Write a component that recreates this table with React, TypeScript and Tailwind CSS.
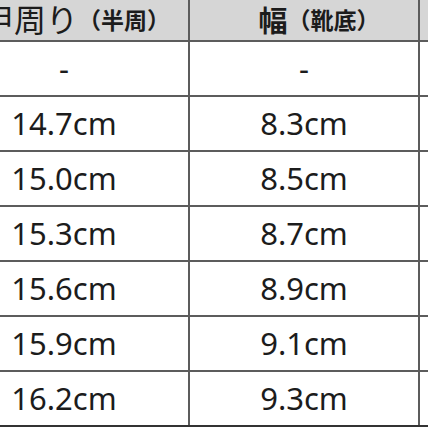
const rows: [string, string][] = [
  ["-", "-"],
  ["14.7cm", "8.3cm"],
  ["15.0cm", "8.5cm"],
  ["15.3cm", "8.7cm"],
  ["15.6cm", "8.9cm"],
  ["15.9cm", "9.1cm"],
  ["16.2cm", "9.3cm"],
];

const font = { fontFamily: '"Noto Sans", "Noto Sans CJK JP", sans-serif' };

export default function App() {
  return (
    <div className="w-[428px] h-[428px] overflow-hidden bg-white text-[#1c1c1c]" style={font}>
      <div className="ml-[-60px] w-[560px]">
        {/* header */}
        <div className="flex h-[42px] bg-[#d6d6d6] border-b-2 border-[#5c5c5c]">
          <div className="w-[250px] shrink-0 flex items-center justify-center pl-6 border-r-2 border-[#5c5c5c]">
            <span className="text-[32px] leading-none whitespace-nowrap">甲周り</span>
            <span className="text-[23px] leading-none font-bold whitespace-nowrap">（半周）</span>
          </div>
          <div className="w-[230px] shrink-0 flex items-center justify-center pl-[30px] border-r-2 border-[#5c5c5c]">
            <span className="text-[29px] leading-none font-bold">幅</span>
            <span className="text-[23px] leading-none font-bold whitespace-nowrap">（靴底）</span>
          </div>
          <div className="flex-1" />
        </div>

        {rows.map(([a, b], i) => (
          <div
            key={i}
            className={
              "flex h-[55px] border-b-2 " +
              (i === rows.length - 1 ? "border-[#333333]" : "border-[#5c5c5c]")
            }
          >
            <div className="w-[250px] shrink-0 flex items-center justify-center border-r-2 border-[#5c5c5c] text-[31px]">
              {a}
            </div>
            <div className="w-[230px] shrink-0 flex items-center justify-center border-r-2 border-[#5c5c5c] text-[31px]">
              {b}
            </div>
            <div className="flex-1" />
          </div>
        ))}
      </div>
    </div>
  );
}
